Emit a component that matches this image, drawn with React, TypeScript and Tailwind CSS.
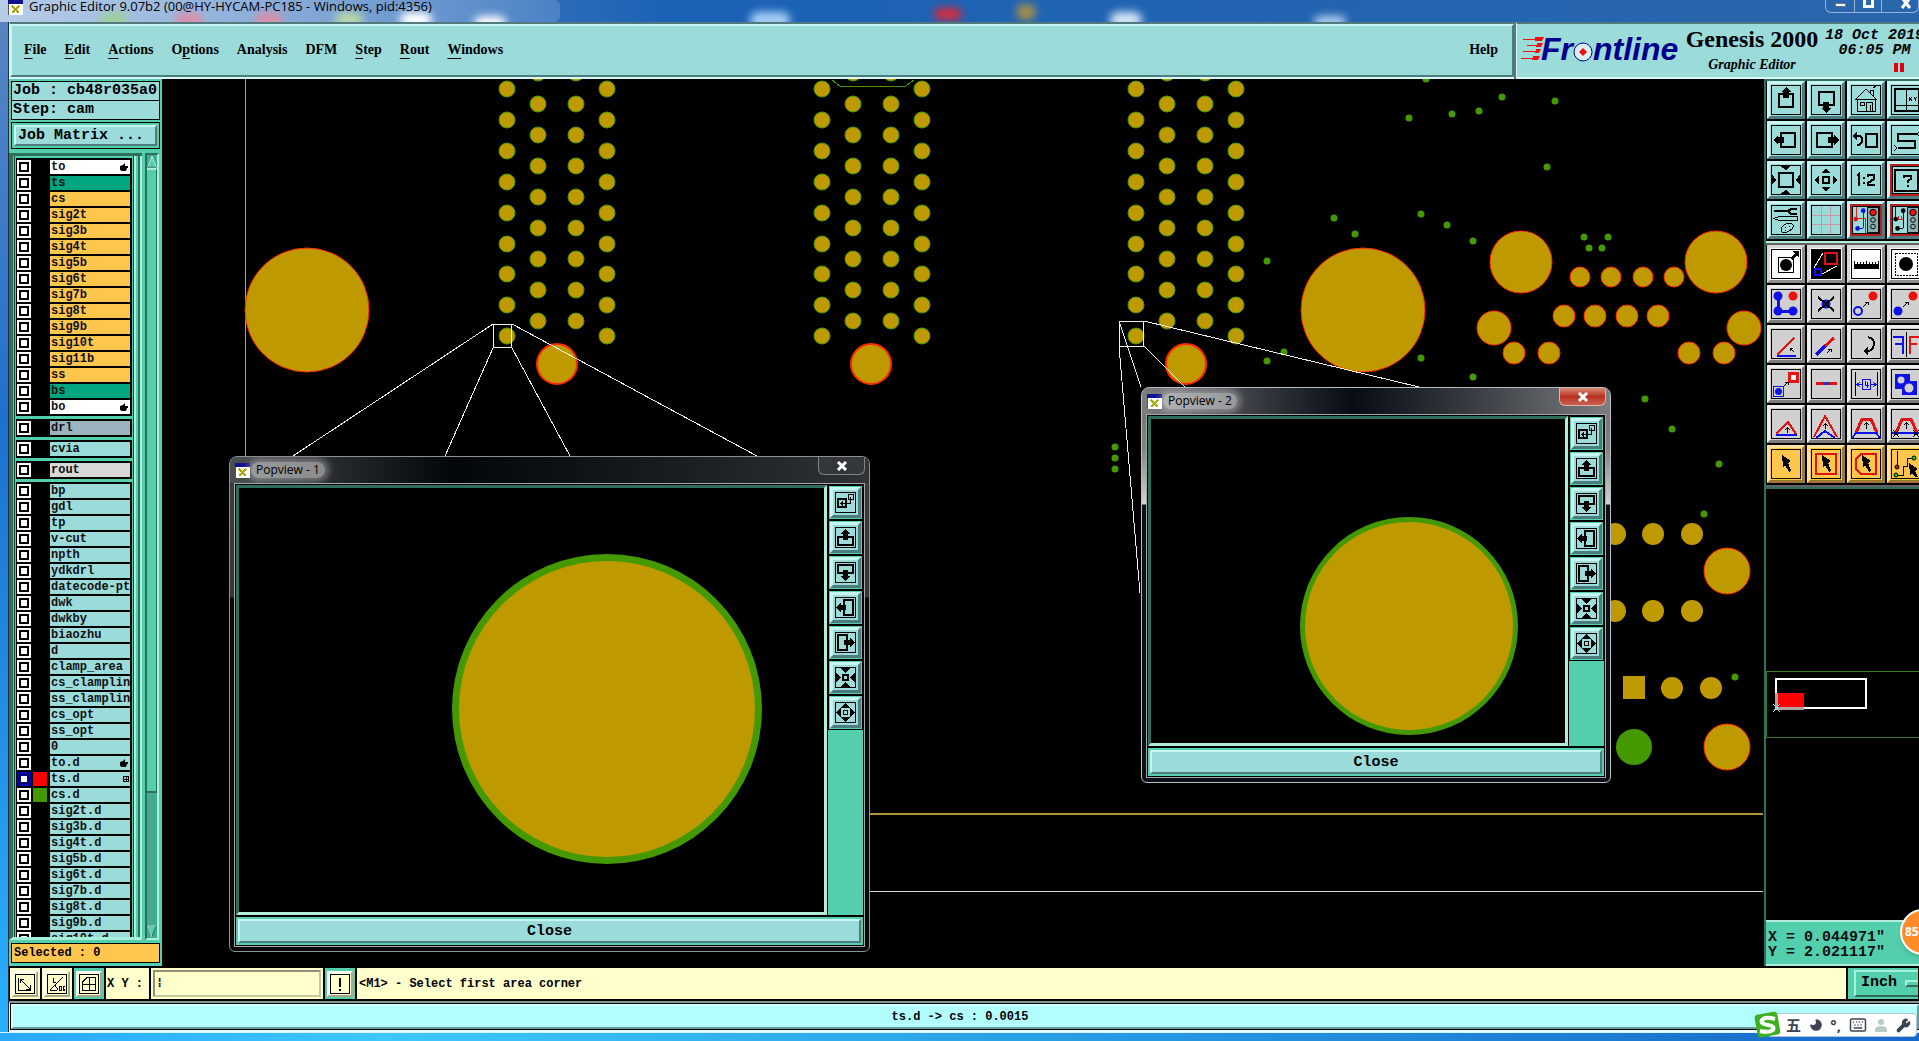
import type { ReactNode } from "react";
import { Keyboard, Moon, Wrench } from "lucide-react";

const mono = "font-['Liberation_Mono',monospace]";
const serif = "font-['Liberation_Serif',serif]";
const ui = "font-['Open_Sans',sans-serif]";

const tealBevel = "border-t-[#c6f5f3] border-l-[#c6f5f3] border-r-[#4d7c80] border-b-[#4d7c80] bg-[#9bdbda]";
const grayBevel = "border-t-[#eeeeee] border-l-[#eeeeee] border-r-[#7c7c7c] border-b-[#7c7c7c] bg-[#d0d0d0]";
const whiteBevel = "border-t-[#d8d8d8] border-l-[#d8d8d8] border-r-[#8c8c8c] border-b-[#8c8c8c] bg-white";
const redBevel = "border-t-[#c6f5f3] border-l-[#c6f5f3] border-r-[#4d7c80] border-b-[#4d7c80] bg-[#b82020]";
const orangeBevel = "border-t-[#ffe2a0] border-l-[#ffe2a0] border-r-[#9c7830] border-b-[#9c7830] bg-[#ffc64e]";

const RED = "#e01414";
const BLUE = "#1010e8";

/* ---------- menu ---------- */

const menus = [
  { pre: "", key: "F", post: "ile" },
  { pre: "", key: "E", post: "dit" },
  { pre: "", key: "A", post: "ctions" },
  { pre: "O", key: "p", post: "tions" },
  { pre: "Analysis", key: "", post: "" },
  { pre: "DFM", key: "", post: "" },
  { pre: "", key: "S", post: "tep" },
  { pre: "", key: "R", post: "out" },
  { pre: "", key: "W", post: "indows" },
];

const XIcon = () => (
  <svg viewBox="0 0 15 15" className="size-[15px] shrink-0" shapeRendering="crispEdges">
    <rect width="15" height="15" fill="#fff" stroke="#555" />
    <rect width="15" height="4" fill="#10108c" />
    <path d="M4 6L11 13M11 6L4 13" stroke="#a8a800" strokeWidth="2" />
  </svg>
);

const TitleBar = () => (
  <div className="relative flex h-[22px] shrink-0 items-start overflow-hidden bg-linear-to-r from-[#6f9ad0] via-[#1a62b6] via-35% to-[#2a66ac]">
    <div className="absolute inset-y-0 left-0 w-[560px] rounded-r-md bg-linear-to-r from-white/50 to-white/15" />
    <div className="absolute top-3 left-[100px] h-4 w-7 rounded-full bg-[#9cd09c] blur-xs" />
    <div className="absolute top-3 left-[175px] h-4 w-7 rounded-full bg-[#d890a8] blur-xs" />
    <div className="absolute top-3 left-[255px] h-4 w-7 rounded-full bg-[#d890a8] blur-xs" />
    <div className="absolute top-3 left-[335px] h-4 w-7 rounded-full bg-[#b8d8a8] blur-xs" />
    <div className="absolute top-3 left-[400px] h-4 w-8 rounded-full bg-white blur-xs" />
    <div className="absolute top-4 left-[474px] h-4 w-8 rounded-full bg-white blur-xs" />
    <div className="absolute top-3 left-[750px] h-4 w-10 rounded-full bg-[#a8d0f8] blur-xs" />
    <div className="absolute top-2 left-[934px] h-3 w-7 rounded-full bg-[#e02838] blur-xs" />
    <div className="absolute top-1 left-[1016px] h-4 w-5 rounded-full bg-[#a89048] blur-xs" />
    <div className="absolute top-3 left-[1110px] h-4 w-8 rounded-full bg-[#d8e8f8] blur-xs" />
    <div className="absolute top-4 left-[1314px] h-3 w-8 rounded-full bg-[#b8d0f0] blur-xs" />
    <div className="relative flex items-center gap-[6px] pl-[8px]">
      <XIcon />
      <span className={`${ui} pb-[2px] text-[13px] leading-[13px] text-black`}>
        Graphic Editor 9.07b2 (00@HY-HYCAM-PC185 - Windows, pid:4356)
      </span>
    </div>
    <div className="relative ml-auto flex h-[13px] w-[94px] shrink-0 divide-x divide-white/50 overflow-hidden rounded-b-md border border-t-0 border-white/50">
      <button aria-label="Minimize" className="flex w-[29px] shrink-0 justify-center pt-[3px]">
        <span className="h-[4px] w-[11px] border border-slate-500 bg-white" />
      </button>
      <button aria-label="Maximize" className="flex w-[27px] shrink-0 justify-center">
        <span className="h-[8px] w-[11px] border-[3px] border-t-0 border-white" />
      </button>
      <button aria-label="Close window" className="flex w-[47px] shrink-0 items-end justify-center">
        <svg viewBox="0 0 12 9" className="mb-[3px] h-[9px] w-[12px]">
          <path d="M2 -2L10 8M10 -2L2 8" stroke="#fff" strokeWidth="3" />
        </svg>
      </button>
    </div>
  </div>
);

const Logo = () => (
  <svg viewBox="0 0 162 40" className="h-[40px] w-[162px] shrink-0" aria-label="Frontline">
    <g fill="#f01010">
      <path d="M2 10h12v-2h9l-2 4h-7v-1H2z" />
      <path d="M6 16h10v-2h6l-2 4h-5v-1H6z" />
      <path d="M2 22h13v-2h5l-2 4h-4v-1H2z" />
      <path d="M0 29h12v-2h7l-2 4h-6v-1H0z" />
    </g>
    <g fill="#00008c" fontFamily="'Liberation Sans', sans-serif" fontWeight="700" fontStyle="italic" fontSize="32">
      <text x="20" y="31">Fr</text>
      <text x="72" y="31">ntline</text>
    </g>
    <ellipse cx="62" cy="23" rx="9" ry="9" fill="#d8f0f4" stroke="#00008c" strokeWidth="1" />
    <path d="M62 19l4 4-4 4-4-4z" fill="#f01010" />
  </svg>
);

const Header = () => (
  <header className="flex h-[57px] shrink-0 bg-[#527a7c]">
    <div className="flex min-w-0 flex-1 items-center border-t-2 border-b-2 border-l border-t-[#527a7c] border-b-[#d8fbf8] border-l-[#d8fbf8] bg-[#9bdbda]">
      <nav className={`flex h-full flex-1 items-center justify-between border-2 border-t-[#c6f5f3] border-l-[#c6f5f3] border-r-[#4d7c80] border-b-[#4d7c80] pr-[14px] pb-[2px] pl-[12px] ${serif} text-[14px] font-bold text-black`}>
        <div className="flex gap-[18px]">
          {menus.map((m) => (
            <button key={m.pre + m.key + m.post}>
              {m.pre}
              <span className="underline underline-offset-4">{m.key}</span>
              {m.post}
            </button>
          ))}
        </div>
        <button>Help</button>
      </nav>
    </div>
    <div className="ml-[2px] flex w-[403px] shrink-0 overflow-hidden border-y-2 border-l border-t-[#527a7c] border-b-[#d8fbf8] border-l-[#d8fbf8] bg-[#9bdbda] pl-[4px]">
      <div className="pt-[5px]">
        <Logo />
      </div>
      <div className={`flex w-[138px] shrink-0 flex-col items-center whitespace-nowrap ${serif} font-bold text-black`}>
        <div className="pt-[2px] text-[24px] leading-[26px]">Genesis 2000</div>
        <div className="pt-[5px] text-[14px] leading-[16px] italic">Graphic Editor</div>
      </div>
      <div className={`ml-[4px] w-[99px] shrink-0 text-center whitespace-nowrap ${mono} pt-[4px] text-[15px] leading-[15px] font-bold text-black italic`}>
        <div>18 Oct 2019</div>
        <div>06:05 PM</div>
        <div className="flex justify-center gap-[2px] pt-[5px] pl-[48px]">
          <span className="h-[9px] w-[4px] bg-red-600" />
          <span className="h-[9px] w-[4px] bg-red-600" />
        </div>
      </div>
    </div>
  </header>
);

/* ---------- layer list ---------- */

type Layer = { name: string; bg: string; mark?: "hand" | "grid"; color?: string; active?: boolean };

const WHITE = "bg-white";
const GREEN = "bg-[#00a67e]";
const AMBER = "bg-[#ffc64e]";
const CYAN = "bg-[#9bdbda]";

const of = (bg: string, names: string[]): Layer[] => names.map((name) => ({ name, bg }));

const layerGroups: Layer[][] = [
  [
    { name: "to", bg: WHITE, mark: "hand" },
    { name: "ts", bg: GREEN },
    ...of(AMBER, ["cs", "sig2t", "sig3b", "sig4t", "sig5b", "sig6t", "sig7b", "sig8t", "sig9b", "sig10t", "sig11b", "ss"]),
    { name: "bs", bg: GREEN },
    { name: "bo", bg: WHITE, mark: "hand" },
  ],
  [{ name: "drl", bg: "bg-[#9bb4c0]" }],
  [{ name: "cvia", bg: CYAN }],
  [{ name: "rout", bg: "bg-[#d8d8d8]" }],
  [
    ...of(CYAN, ["bp", "gdl", "tp", "v-cut", "npth", "ydkdrl", "datecode-pte", "dwk", "dwkby", "biaozhu", "d", "clamp_area", "cs_clampline", "ss_clampline", "cs_opt", "ss_opt", "0"]),
    { name: "to.d", bg: CYAN, mark: "hand" },
    { name: "ts.d", bg: CYAN, mark: "grid", color: "bg-[#ff0000]", active: true },
    { name: "cs.d", bg: CYAN, color: "bg-[#459900]" },
    ...of(CYAN, ["sig2t.d", "sig3b.d", "sig4t.d", "sig5b.d", "sig6t.d", "sig7b.d", "sig8t.d", "sig9b.d", "sig10t.d"]),
  ],
];

const LayerRow = ({ layer }: { layer: Layer }) => (
  <label className="flex h-[16px] items-center gap-[2px]">
    <input
      type="checkbox"
      className={`size-[14px] shrink-0 appearance-none border-2 bg-white ${layer.active ? "border-[#0000b8] shadow-[inset_0_0_0_2px_#000070]" : "border-white shadow-[inset_0_0_0_2px_#000]"}`}
    />
    <span className={`h-[14px] w-[14px] shrink-0 ${layer.color ?? "bg-black"}`} />
    <span className={`ml-px flex h-[14px] min-w-0 flex-1 items-center overflow-hidden pl-px text-[12px] leading-[14px] font-bold whitespace-nowrap text-[#101010] ${layer.bg}`}>
      {layer.name}
      {layer.mark === "hand" && (
        <svg viewBox="0 0 8 8" className="mr-[2px] ml-auto size-[8px]">
          <path d="M0 3L3 2L5 0V3H8V5H7L6 8H2L0 7Z" />
        </svg>
      )}
      {layer.mark === "grid" && (
        <svg viewBox="0 0 6 6" className="mr-px ml-auto size-[6px]" shapeRendering="crispEdges">
          <path d="M.5 .5h5v5h-5zM3 0v6M0 3h6" fill="none" stroke="#000" />
        </svg>
      )}
    </span>
  </label>
);

const Sidebar = () => (
  <aside className={`flex w-[153px] shrink-0 flex-col bg-[#53cfae] ${mono} text-black`}>
    <div className="mx-[2px] mt-[2px] text-[15px] leading-[18px] font-bold">
      <div className="h-[20px] border border-black bg-[#9bdbda] pl-px">Job : cb48r035a0</div>
      <div className="-mt-px h-[20px] border border-black bg-[#9bdbda] pl-px">Step: cam</div>
    </div>
    <div className="mx-[2px] mt-[2px] h-[27px] border border-black p-[2px]">
      <button className={`block h-full w-full border-2 pl-[2px] text-left text-[15px] leading-[18px] font-bold ${tealBevel}`}>
        Job Matrix ...
      </button>
    </div>
    <div className="mt-[4px] flex min-h-0 flex-1">
      <div className="flex min-w-0 flex-1 overflow-hidden border-t-[3px] border-b-[3px] border-l-4 border-t-[#2e6e5c] border-b-[#a8f0dc] border-l-[#2e6e5c] pl-px">
        <div className="w-[121px] overflow-hidden border-r border-l border-[#184838] px-px pt-[2px]">
          {layerGroups.map((group) => (
            <div key={group[0].name} className="mb-[3px] border border-black bg-black pr-px">
              {group.map((layer) => (
                <LayerRow key={layer.name} layer={layer} />
              ))}
            </div>
          ))}
        </div>
        <div className="w-[2px] bg-[#a8f0dc]" />
        <div className="ml-[2px] w-[2px] bg-[#2e6e5c]" />
        <div className="w-[2px] bg-[#a8f0dc]" />
      </div>
      <div className="ml-[3px] flex w-[14px] flex-col border-2 border-t-[#2e6e5c] border-l-[#2e6e5c] border-r-[#a8f0dc] border-b-[#a8f0dc] bg-[#43ab92]">
        <svg viewBox="0 0 10 13" className="h-[13px] w-[10px]">
          <path d="M5 1L9 12H1Z" fill="#53cfae" stroke="#a8f0dc" />
          <path d="M9 12H1" stroke="#2e6e5c" />
        </svg>
        <div className="flex-[625] border-t-2 border-r border-b-2 border-t-[#a8f0dc] border-r-[#2e6e5c] border-b-[#2e6e5c] bg-[#53cfae]" />
        <div className="flex-[133]" />
        <svg viewBox="0 0 10 13" className="h-[13px] w-[10px]">
          <path d="M5 12L9 1H1Z" fill="#53cfae" stroke="#2e6e5c" />
          <path d="M9 1H1L5 12" fill="none" stroke="#a8f0dc" />
        </svg>
      </div>
      <div className="w-[3px]" />
    </div>
    <div className="mx-[2px] mt-[3px] mb-[3px] h-[20px] border border-black bg-[#ffc64e] pl-[2px] text-[12px] leading-[18px] font-bold">
      Selected : 0
    </div>
  </aside>
);

/* ---------- board drawing ---------- */

const GOLD = "#bf9900";
const LEAF = "#459900";

const connectors = [0, 315, 629];
const outerRows = [89, 120, 151, 182, 213, 244, 274, 305, 336];
const innerRows = [73, 104, 135, 166, 197, 228, 259, 290, 321];

const ringed = [
  [307, 310, 62], [1363, 310, 62],
  [557, 364, 20], [871, 364, 20], [1186, 364, 20],
  [1521, 262, 31], [1716, 262, 31],
  [1580, 277, 10], [1611, 277, 10], [1643, 277, 10], [1674, 277, 10],
  [1564, 316, 11], [1595, 316, 11], [1627, 316, 11], [1658, 316, 11],
  [1494, 328, 17], [1744, 328, 17],
  [1514, 353, 11], [1549, 353, 11], [1689, 353, 11], [1724, 353, 11],
  [1727, 571, 23], [1727, 747, 23],
];

const plain = [
  [1615, 534], [1653, 534], [1692, 534],
  [1615, 611], [1653, 611], [1692, 611],
  [1672, 688], [1711, 688],
];

const vias = [
  [1426, 79], [1409, 118], [1452, 114], [1479, 111], [1502, 97], [1555, 101], [1547, 167],
  [1421, 214], [1447, 225], [1473, 241], [1584, 237], [1608, 237], [1589, 248], [1602, 248],
  [1421, 358], [1473, 377], [1645, 399], [1672, 429], [1719, 464], [1704, 514], [1735, 677],
  [1334, 218], [1355, 234], [1267, 261], [1284, 352], [1267, 361],
  [1115, 447], [1115, 458], [1115, 469],
];

const Board = () => (
  <svg className="absolute inset-0 h-full w-full [&_circle]:[shape-rendering:auto]" shapeRendering="crispEdges">
    <g transform="translate(-162 -79)">
      <path d="M245 79V460" stroke="#a0a0a0" />
      <path d="M860 814H1763" stroke="#b09038" strokeWidth="2" />
      <path d="M860 891H1763" stroke="#d8d8d8" />
      <path d="M832 80L840 86H906L914 80" fill="none" stroke={LEAF} />
      {connectors.map((dx) => (
        <g key={dx} fill={GOLD} stroke={LEAF} transform={`translate(${dx} 0)`}>
          {outerRows.map((y) => [507, 607].map((x) => <circle key={`${x}-${y}`} cx={x} cy={y} r="8" />))}
          {innerRows.map((y) => [538, 576].map((x) => <circle key={`${x}-${y}`} cx={x} cy={y} r="8" />))}
        </g>
      ))}
      {ringed.map(([x, y, r]) => (
        <circle key={`${x}-${y}`} cx={x} cy={y} r={r} fill={GOLD} stroke="#ff2800" strokeWidth={r === 20 ? 2 : 1} />
      ))}
      {plain.map(([x, y]) => (
        <circle key={`${x}-${y}`} cx={x} cy={y} r="11" fill={GOLD} />
      ))}
      <rect x="1623" y="676" width="22" height="23" fill={GOLD} />
      <circle cx="1634" cy="747" r="18" fill={LEAF} />
      {vias.map(([x, y]) => (
        <circle key={`${x}-${y}`} cx={x} cy={y} r="3.500" fill={LEAF} />
      ))}
      <g fill="none" stroke="#f0f0f0">
        <rect x="493" y="324" width="18" height="23" />
        <path d="M493 324L293 456M493 348L445 456M512 348L570 456M512 324L757 456" />
        <rect x="1119" y="321" width="24" height="25" />
        <path d="M1119 321L1141 387M1119 346L1140 593M1144 346L1185 387M1144 321L1419 387" />
      </g>
    </g>
  </svg>
);

/* ---------- popview windows ---------- */

const popIcons: { label: string; art: ReactNode }[] = [
  {
    label: "Locate",
    art: (
      <>
        <path d="M3 7h8v8H3z" fill="none" stroke="#000" strokeWidth="2" />
        <path d="M13.5 2.5h5v5h-5zM15.500 5V11.500H6M8 9.500L6 11.500L8 13.500" fill="none" stroke="#000" />
      </>
    ),
  },
  {
    label: "Pan up",
    art: (
      <>
        <path d="M8 10H3V18H18V10H13" fill="none" stroke="#000" strokeWidth="2" />
        <path d="M10.500 2L16 7H13V13H8V7H5Z" />
      </>
    ),
  },
  {
    label: "Pan down",
    art: (
      <>
        <path d="M8 11H3V3H18V11H13" fill="none" stroke="#000" strokeWidth="2" />
        <path d="M10.500 19L16 14H13V8H8V14H5Z" />
      </>
    ),
  },
  {
    label: "Pan left",
    art: (
      <>
        <path d="M9 8V3H18V18H9V13" fill="none" stroke="#000" strokeWidth="2" />
        <path d="M1 10.500L6 5V8H11V13H6V16Z" />
      </>
    ),
  },
  {
    label: "Pan right",
    art: (
      <>
        <path d="M12 8V3H3V18H12V13" fill="none" stroke="#000" strokeWidth="2" />
        <path d="M20 10.500L15 5V8H9V13H15V16Z" />
      </>
    ),
  },
  {
    label: "Zoom in",
    art: (
      <>
        <path d="M8 8h5v5H8z" fill="none" stroke="#000" strokeWidth="2" />
        <path d="M5 1H16L10.500 6ZM5 20H16L10.500 15ZM1 5V16L6 10.500ZM20 5V16L15 10.500Z" />
      </>
    ),
  },
  {
    label: "Zoom out",
    art: (
      <>
        <path d="M8.500 8.500h4v4h-4z" fill="none" stroke="#000" />
        <path d="M6 6H15L10.500 1ZM6 15H15L10.500 20ZM6 6V15L1 10.500ZM15 6V15L20 10.500Z" />
      </>
    ),
  },
];

type PopviewProps = {
  title: string;
  place: string;
  frame: string;
  bar: string;
  closeButton: string;
  children: ReactNode;
};

const Popview = ({ title, place, frame, bar, closeButton, children }: PopviewProps) => (
  <section className={`absolute flex flex-col overflow-hidden rounded-t-lg rounded-b-md border px-[4px] pb-[4px] ${place} ${frame}`}>
    <div className={`-mx-[4px] flex h-[26px] shrink-0 items-start px-[4px] ${bar}`}>
      <div className="mt-[5px] ml-px flex items-center">
        <XIcon />
        <h2 className={`${ui} ml-px rounded-full bg-white/45 px-[5px] text-[12px] leading-[16px] text-black shadow-[0_0_6px_4px_#ffffff50]`}>
          {title}
        </h2>
      </div>
      <button aria-label={`Close ${title}`} className={`ml-auto flex h-[18px] w-[47px] items-center justify-center rounded-b-md border border-t-0 ${closeButton}`}>
        <svg viewBox="0 0 12 10" className="h-[10px] w-[12px]">
          <path d="M2 1L10 9M10 1L2 9" stroke="#fff" strokeWidth="3" />
        </svg>
      </button>
    </div>
    <div className="flex min-h-0 flex-1 flex-col border border-[#a4a8aa] bg-black p-px">
      <div className="flex min-h-0 flex-1 gap-px">
        <div className="relative min-w-0 flex-1 border-[3px] border-t-[#2e6e5c] border-l-[#2e6e5c] border-r-[#b4ecdc] border-b-[#b4ecdc] bg-black">
          {children}
        </div>
        <div className="flex w-[35px] flex-col bg-[#53cfae]">
          {popIcons.map((icon) => (
            <button key={icon.label} aria-label={icon.label} className="h-[35px] shrink-0 border border-black bg-[#53cfae] p-px">
              <span className={`flex h-full w-full items-center justify-center border-[3px] ${tealBevel}`}>
                <svg viewBox="0 0 21 21" className="size-[21px] shrink-0" shapeRendering="crispEdges">
                  <rect x=".5" y=".5" width="20" height="20" fill="none" stroke="#000" />
                  {icon.art}
                </svg>
              </span>
            </button>
          ))}
        </div>
      </div>
      <div className="mt-[2px] h-[28px] shrink-0 bg-[#53cfae] p-[2px]">
        <button className={`block h-full w-full border-2 text-center text-[15px] leading-[22px] font-bold text-black ${mono} ${tealBevel}`}>
          Close
        </button>
      </div>
    </div>
  </section>
);

const Pad = ({ cx, cy, r, ring }: { cx: number; cy: number; r: number; ring: number }) => (
  <svg className="absolute inset-0 h-full w-full">
    <circle cx={cx} cy={cy} r={r} fill={LEAF} />
    <circle cx={cx} cy={cy} r={r - ring} fill={GOLD} />
  </svg>
);

/* ---------- right tool panel ---------- */

type Tool = { label: string; bevel: string; art: ReactNode; dark?: boolean; alert?: boolean };

const light = (x: number, on: string) => (
  <>
    <rect x={x} y="2" width="11" height="26" fill="#88b0b0" stroke="#000" />
    <circle cx={x + 5.5} cy="7" r="3.500" fill={on} stroke="#000" />
    <circle cx={x + 5.5} cy="15" r="2.500" fill="none" stroke="#000" />
    <circle cx={x + 5.5} cy="22" r="2.500" fill="none" stroke="#000" />
  </>
);

const cursor = <path d="M11 6L20 12L17 14L20 21L18 23L14 16L12 18Z" />;

const viewTools: Tool[] = [
  { label: "Pan up", bevel: tealBevel, art: <><path d="M8 9H22V22H8Z" fill="none" stroke="#000" strokeWidth="2" /><path d="M15 2L20 7H18V13H12V7H10Z" /></> },
  { label: "Pan down", bevel: tealBevel, art: <><path d="M8 7H23V20H8Z" fill="none" stroke="#000" strokeWidth="2" /><path d="M15 28L20 23H18V17H12V23H10Z" /></> },
  { label: "Home", bevel: tealBevel, art: <path d="M5 14L15 4L25 14ZM6.500 14V26.500H24.500V14M9.500 17.500H13.500V20.500H9.500ZM15.500 26V17.500H21.500V26M19 26V20M19.500 8V5.500H22.500V11M22 3L25 1" fill="none" stroke="#000" /> },
  { label: "Coordinates", bevel: tealBevel, art: <><path d="M4 4H28V26H4Z" fill="none" stroke="#000" strokeWidth="2" /><path d="M15.500 4V26M4 20.500H28M18 12L21 16M21 12L18 16M23 12L24.500 14L26 12M24.500 14V16" fill="none" stroke="#000" /></> },
  { label: "Pan left", bevel: tealBevel, art: <><path d="M10 8H24V22H10Z" fill="none" stroke="#000" strokeWidth="2" /><path d="M2 15L7 10V12H13V18H7V20Z" /></> },
  { label: "Pan right", bevel: tealBevel, art: <><path d="M6 8H21V22H6Z" fill="none" stroke="#000" strokeWidth="2" /><path d="M28 15L23 10V12H17V18H23V20Z" /></> },
  { label: "Previous view", bevel: tealBevel, art: <><path d="M15 9H26V22H15Z" fill="none" stroke="#000" strokeWidth="2" /><path d="M5 11H8Q11 11 11 15Q11 20 6 20" fill="none" stroke="#000" strokeWidth="2" /><path d="M1 11L6 7V15Z" /></> },
  { label: "Snake", bevel: tealBevel, art: <><path d="M26 9H7V16H24V23H7" fill="none" stroke="#000" strokeWidth="2" /><path d="M3 20L6 23L3 26M29 6L26 9L29 12" fill="none" stroke="#000" /></> },
  { label: "Zoom in", bevel: tealBevel, art: <><path d="M8 8H22V22H8Z" fill="none" stroke="#000" strokeWidth="2" /><path d="M9 1H20L15 5ZM9 29H20L15 25ZM1 9V20L5 15ZM29 9V20L25 15Z" /></> },
  { label: "Zoom out", bevel: tealBevel, art: <><path d="M12 12H18V18H12Z" fill="none" stroke="#000" strokeWidth="2" /><path d="M10 8H20L15 4ZM10 22H20L15 26ZM8 10V20L4 15ZM22 10V20L26 15Z" /></> },
  { label: "Scale 1:2", bevel: tealBevel, art: <path d="M6 11L8 9V21M13 12V14M13 17V19M17 12V10H23V14L17 18V20H24" fill="none" stroke="#000" strokeWidth="2" /> },
  { label: "Help", bevel: redBevel, alert: true, art: <><path d="M3 4H28V27H3Z" fill="none" stroke="#000" strokeWidth="2" /><path d="M13 13V11H20V14L17 16V18M17 20V22" fill="none" stroke="#000" strokeWidth="2" /></> },
  { label: "Settings", bevel: tealBevel, art: <><path d="M3 6H17" stroke="#000" strokeWidth="2" /><path d="M26 4H20L17 6L20 9H26" fill="none" stroke="#000" strokeWidth="2" /><path d="M3 13.500L8 11.500H26V15.500H8ZM11 22Q14 18 20 18.500Q24 20 21 24Q16 29 11 27Q9 25 11 22M14 22h1M18 21h1M14 25h1" fill="none" stroke="#000" /></> },
  { label: "Grid", bevel: tealBevel, art: <path d="M10.500 1V29M19.500 1V29M1 10.500H29M1 19.500H29" stroke="#c898a8" /> },
  { label: "Net check", bevel: redBevel, alert: true, art: <><path d="M4.500 1V13H14V29" fill="none" stroke={RED} /><path d="M13 5L12 24H7" fill="none" stroke={BLUE} /><circle cx="4" cy="14" r="2.500" fill={RED} /><circle cx="12" cy="5" r="2.500" fill={BLUE} /><circle cx="6" cy="24" r="2.500" fill={BLUE} />{light(17, "#f01010")}</> },
  { label: "Net compare", bevel: redBevel, alert: true, art: <><path d="M4 1V13M12 5V24H7" fill="none" stroke="#000" /><path d="M5 14H12M7 11V14M10 11V14" stroke={RED} /><circle cx="4" cy="14" r="2.500" /><circle cx="12" cy="5" r="2.500" /><circle cx="6" cy="24" r="2.500" />{light(17, "#f01010")}</> },
];

const editTools: Tool[] = [
  { label: "Select pad", bevel: whiteBevel, art: <><path d="M7.500 8.500H22.500V23.500H7.500Z" fill="none" stroke="#000" /><circle cx="15" cy="16" r="6" /><path d="M19 9L24 5L22 2H28V8L26 7L21 11Z" /></> },
  { label: "Popview", bevel: whiteBevel, dark: true, art: <><path d="M3 19L12 4M11 25L26 17" stroke="#fff" /><path d="M14 4H26V15H14Z" fill="none" stroke={RED} strokeWidth="2" /><path d="M4 20H10V26H4Z" fill="none" stroke={BLUE} strokeWidth="2" /></> },
  { label: "Measure", bevel: whiteBevel, art: <><rect x="3" y="15" width="25" height="5" /><path d="M3.500 12V16M6.500 13V16M9.500 13V16M12.500 13V16M15.500 12V16M18.500 13V16M21.500 13V16M24.500 13V16M27.500 12V16" stroke="#000" /></> },
  { label: "Area select", bevel: whiteBevel, art: <><path d="M4.500 4.500H26.500V26.500H4.500Z" fill="none" stroke="#000" strokeDasharray="2 1" /><circle cx="15" cy="15" r="7" /></> },
  { label: "Connect", bevel: grayBevel, art: <><path d="M7 7V22H22" fill="none" stroke={BLUE} strokeWidth="3" /><circle cx="7" cy="7" r="4.500" fill={BLUE} /><circle cx="7" cy="22" r="4.500" fill={BLUE} /><circle cx="22" cy="22" r="4.500" fill={BLUE} /><circle cx="22" cy="7" r="4.500" fill="#f01010" /></> },
  { label: "Delete", bevel: grayBevel, art: <><circle cx="15" cy="15" r="4.500" fill={BLUE} /><path d="M7 8L23 22M23 8L7 22" stroke="#000" strokeWidth="2" /></> },
  { label: "Move copy", bevel: grayBevel, art: <><circle cx="22" cy="7" r="4.500" fill="#f01010" /><circle cx="7" cy="22" r="4" fill="none" stroke={BLUE} strokeWidth="2" /><path d="M12 18L17 13M14 13H17V16" fill="none" stroke="#000" /></> },
  { label: "Move", bevel: grayBevel, art: <><circle cx="22" cy="7" r="4.500" fill="#f01010" /><circle cx="7" cy="22" r="4.500" fill={BLUE} /><path d="M12 18L17 13M14 13H17V16" fill="none" stroke="#000" /></> },
  { label: "Rotate line", bevel: grayBevel, art: <><path d="M6 26L23 9" stroke={RED} strokeWidth="2" /><path d="M6 27H25" stroke={BLUE} strokeWidth="2" /><path d="M23 23L19 19M19 22V19H22" fill="none" stroke="#000" /></> },
  { label: "Stretch line", bevel: grayBevel, art: <><path d="M14 17L23 9" stroke={RED} strokeWidth="3" /><path d="M5 26L14 17" stroke={BLUE} strokeWidth="3" /><path d="M16 24L20 20M17 20H20V23" fill="none" stroke="#000" /></> },
  { label: "Rotate", bevel: grayBevel, art: <><path d="M17 8Q24 10 23 16Q21 23 15 22" fill="none" stroke="#000" strokeWidth="2" /><path d="M12 22L17 18V26Z" /></> },
  { label: "Mirror", bevel: grayBevel, art: <><path d="M2 8H12V25M4 15H12" fill="none" stroke={BLUE} strokeWidth="2" /><path d="M15.500 3V28" stroke="#000" /><path d="M28 8H19V25M19 15H26" fill="none" stroke={RED} strokeWidth="2" /></> },
  { label: "Resize", bevel: grayBevel, art: <><path d="M18 4H26V12H18Z" fill="#fff" stroke="#f01010" strokeWidth="3" /><path d="M2.500 17.500H12.500V27.500H2.500Z" fill="none" stroke={BLUE} /><circle cx="7.500" cy="22.500" r="3.500" fill={BLUE} /><path d="M13 17L17 13M14 13H17V16" fill="none" stroke="#000" /></> },
  { label: "Break", bevel: grayBevel, art: <><path d="M5 14.500H26" stroke={RED} strokeWidth="3" /><path d="M12 14.500H19" stroke="#3030b0" strokeWidth="3" /></> },
  { label: "Spacing", bevel: grayBevel, art: <><path d="M4.500 3V27M26.500 3V27" stroke="#000" /><path d="M6 15.500H11M9 13L6 15.500L9 18M25 15.500H20M22 13L25 15.500L22 18M11.500 10.500H19.500V20.500H11.500ZM14 12V16H18M16.500 13V19" fill="none" stroke={BLUE} /></> },
  { label: "Merge", bevel: grayBevel, art: <><path d="M4 5H19V12H26V26H11V20H4Z" fill={BLUE} /><circle cx="10" cy="11" r="3.500" fill="#d0d0d0" /><circle cx="18" cy="19" r="4.500" fill="#d0d0d0" /></> },
  { label: "Triangle", bevel: grayBevel, art: <><path d="M5 25L17 13L25 25" fill="none" stroke={RED} strokeWidth="2" /><path d="M5 26H26" stroke={BLUE} strokeWidth="2" /><path d="M16.500 24V19M14 21L16.500 19L19 21" fill="none" stroke="#000" /></> },
  { label: "Sharp corner", bevel: grayBevel, art: <><path d="M3 28L14 7L26 28" fill="none" stroke={RED} strokeWidth="2" /><path d="M5 29L14 22L24 29" fill="none" stroke={BLUE} strokeWidth="2" /><path d="M14.500 20V15M12 17L14.500 15L17 17" fill="none" stroke="#000" /></> },
  { label: "Trapezoid", bevel: grayBevel, art: <><path d="M5 24L11 10H20L26 24" fill="none" stroke={RED} strokeWidth="3" /><path d="M1 29L5 24H25L29 29" fill="none" stroke={BLUE} strokeWidth="2" /><path d="M15.500 20V14M13 16L15.500 14L18 16" fill="none" stroke="#000" /></> },
  { label: "Trim trapezoid", bevel: grayBevel, art: <><path d="M5 24L11 10H20L26 24" fill="none" stroke={RED} strokeWidth="3" /><path d="M1 24H29" stroke={BLUE} strokeWidth="2" /><path d="M15.500 20V14M13 16L15.500 14L18 16M2 21L8 28M8 21L2 28M22 21L28 28M28 21L22 28" fill="none" stroke="#000" /></> },
  { label: "Pointer", bevel: orangeBevel, art: cursor },
  { label: "Rectangle select", bevel: orangeBevel, art: <><path d="M5 5H25V25H5Z" fill="none" stroke={RED} strokeWidth="2" />{cursor}</> },
  { label: "Polygon select", bevel: orangeBevel, art: <><path d="M10 5H25V25H10L5 20V10Z" fill="none" stroke={RED} strokeWidth="2" />{cursor}</> },
  { label: "Net select", bevel: orangeBevel, art: <><path d="M6.500 2V17M6 26H12V17H16V9H22" fill="none" stroke="#000" /><circle cx="6" cy="18" r="2" fill="#c02010" stroke="#000" /><circle cx="5" cy="26" r="2" fill="#20d020" stroke="#000" /><circle cx="23" cy="9" r="2" fill="#20d020" stroke="#000" /><path d="M18 14L27 20L24 22L27 28H24L21 24L19 26Z" /></> },
];

const ToolGrid = ({ tools }: { tools: Tool[] }) => (
  <div className="grid w-[160px] grid-cols-4">
    {tools.map((tool) => (
      <button key={tool.label} aria-label={tool.label} className={`mr-[2px] mb-[2px] flex h-[38px] items-center justify-center border-[3px] ${tool.bevel}`}>
        <svg
          viewBox="0 0 30 30"
          className={`shrink-0 [&_circle]:[shape-rendering:auto] ${tool.alert ? "size-[28px] bg-[#9bdbda]" : "size-[30px]"}`}
          shapeRendering="crispEdges"
        >
          <rect x=".5" y=".5" width="29" height="29" fill={tool.dark ? "#000" : "none"} stroke="#000" />
          {tool.art}
        </svg>
      </button>
    ))}
  </div>
);

const RightPanel = () => (
  <aside className="flex w-[155px] shrink-0 flex-col overflow-hidden border-l-2 border-[#2e6e5c] bg-black">
    <div className="shrink-0 border-t-2 border-t-[#2e6e5c] pl-px">
      <ToolGrid tools={viewTools} />
    </div>
    <div className="h-[2px] shrink-0 bg-[#b4ecdc]" />
    <div className="shrink-0 border-y-2 border-[#606060] pl-px">
      <ToolGrid tools={editTools} />
    </div>
    <div className="min-h-0 flex-1 border-t-2 border-[#2e6e5c]">
      <svg className="h-full w-full" shapeRendering="crispEdges">
        <g transform="translate(-1766 -489)">
          <rect x="1766.500" y="671.500" width="200" height="66" fill="none" stroke="#3c7820" />
          <rect x="1776" y="679" width="90" height="29" fill="none" stroke="#fff" strokeWidth="2" />
          <rect x="1775" y="693" width="29" height="17" fill="#b0a0a4" />
          <rect x="1778" y="693" width="26" height="14" fill="#ff0000" />
          <path d="M1773 704L1780 712M1780 704L1773 712" stroke="#80f0f0" />
        </g>
      </svg>
    </div>
    <div className={`h-[46px] shrink-0 border-y-2 border-t-[#b4ecdc] border-b-[#b4ecdc] bg-[#53cfae] pt-[8px] pl-[2px] ${mono} text-[15px] leading-[15px] font-bold whitespace-pre text-[#101010]`}>
      <div>X = 0.044971"</div>
      <div>Y = 2.021117"</div>
    </div>
  </aside>
);

/* ---------- bottom bars ---------- */

const yellowBevel = "border-2 border-t-[#fffff0] border-l-[#fffff0] border-r-[#a8a888] border-b-[#a8a888] bg-[#ffffcc]";

const SmallButton = ({ label, on, children }: { label: string; on?: boolean; children: ReactNode }) => (
  <button aria-label={label} className={`flex h-[31px] w-[30px] shrink-0 items-center justify-center ${on ? "bg-[#53cfae]" : "bg-[#ffffcc]"}`}>
    <span className={`flex size-[26px] items-center justify-center ${yellowBevel}`}>
      <svg viewBox="0 0 20 20" className="size-[20px] shrink-0" fill="none" stroke="#000" shapeRendering="crispEdges">
        <rect x=".5" y=".5" width="19" height="19" />
        {children}
      </svg>
    </span>
  </button>
);

const CommandBar = () => (
  <div className={`flex h-[35px] shrink-0 items-center gap-[2px] bg-black px-px ${mono} text-[12px] font-bold text-black`}>
    <SmallButton label="Snap diagonal">
      <path d="M3.500 4V16.500H16M5 5L15 15M5 9V5H9M11 15H15V11" />
    </SmallButton>
    <SmallButton label="Snap angle">
      <path d="M3 16L16 3M3 16.500H10M6 4V8H9M8 11L11 16M12 12.500h2v4h-2zM16 12V17M18 12L16 14L18 17" />
    </SmallButton>
    <SmallButton label="Snap grid" on>
      <path d="M3.500 8L8 3.500H16.500V16.500H3.500ZM3 10.500H17M10.500 4V17" />
    </SmallButton>
    <label htmlFor="xy" className="flex h-[31px] w-[43px] shrink-0 items-center bg-[#ffffcc] pl-px whitespace-pre">
      X Y :
    </label>
    <div className="h-[31px] w-[172px] shrink-0 bg-[#ffffcc] p-[2px]">
      <input id="xy" className="block h-full w-full border-2 border-t-[#909078] border-l-[#909078] border-r-[#c8c8a0] border-b-[#c8c8a0] bg-[#ffffcc] px-px outline-none" defaultValue="⁞" />
    </div>
    <SmallButton label="Alert" on>
      <path d="M10 4V13M10 15V17" strokeWidth="2" />
    </SmallButton>
    <div className="flex h-[31px] min-w-0 flex-1 items-center bg-[#ffffcc] pl-[2px]">{"<M1> - Select first area corner"}</div>
    <div className="h-[31px] w-[70px] shrink-0 overflow-hidden bg-[#53cfae] py-[2px] pl-[6px]">
      <button className="flex h-full w-[80px] items-center gap-[8px] border-2 border-t-[#a8f0dc] border-l-[#a8f0dc] border-r-[#2e6e5c] border-b-[#2e6e5c] pl-[5px] text-[15px]">
        Inch
        <span className="h-[7px] w-[16px] border-2 border-t-[#a8f0dc] border-l-[#a8f0dc] border-r-[#2e6e5c] border-b-[#2e6e5c]" />
      </button>
    </div>
  </div>
);

const StatusBar = () => (
  <div className="h-[31px] shrink-0 border-t-2 border-[#7c9898] bg-[#e8ffff] pl-px">
    <div className="h-[27px] border border-r-0 border-black">
      <div className={`flex h-full items-center justify-center border-2 border-t-[#d8ffff] border-l-[#d8ffff] border-r-[#6c9c9c] border-b-[#6c9c9c] bg-[#b2fdfd] pr-[10px] ${mono} text-[12px] font-bold text-black`}>
        {"ts.d -> cs : 0.0015"}
      </div>
    </div>
  </div>
);

const ImeBar = () => (
  <div className="absolute right-[2px] bottom-[4px] flex h-[24px] w-[150px] items-center justify-between rounded-sm border border-[#b0c4d8] bg-white pr-[5px] pl-[14px] text-[#3c4450]">
    <svg viewBox="0 0 28 28" className="absolute -top-[3px] -left-[14px] size-[28px]">
      <rect x="2" y="2" width="23" height="23" rx="3" fill="#3cb020" transform="rotate(-10 14 14)" />
      <path d="M21 8Q11 5 8 9Q6 13 14 14Q21 15 19 19Q15 22 6 20" fill="none" stroke="#fff" strokeWidth="4" />
    </svg>
    <span className="pl-[4px] font-['Noto_Sans_CJK_SC',sans-serif] text-[15px] leading-[20px] font-bold">五</span>
    <Moon className="size-[14px] -scale-x-100" fill="#3c4450" />
    <span className="text-[15px] leading-[16px] font-bold">°,</span>
    <Keyboard className="size-[18px]" />
    <svg viewBox="0 0 14 14" className="size-[14px]" fill="#b8ccc8">
      <circle cx="7" cy="4" r="3" />
      <path d="M1 14V11Q2 8 7 8Q12 8 13 11V14Z" />
    </svg>
    <Wrench className="size-[15px]" fill="#3c4450" />
  </div>
);

export default function App() {
  return (
    <div className="relative flex h-screen flex-col overflow-hidden bg-linear-to-b from-[#5a86c0] via-[#1e70d0] via-40% to-[#2ab0ff]">
      <TitleBar />
      <div className="ml-[8px] flex min-h-0 flex-1 flex-col border-l border-[#203040]">
        <Header />
        <div className="flex min-h-0 flex-1">
          <Sidebar />
          <main className="relative min-w-0 flex-1 overflow-hidden bg-black">
            <Board />
            <Popview
              title="Popview - 1"
              place="top-[377px] left-[67px] h-[496px] w-[641px]"
              frame="border-[#8c9092] bg-[linear-gradient(#3a3d40,#34373a_140px,#08090a_141px)]"
              bar="bg-linear-to-r from-[#4c4f52] via-[#04070a] via-35% to-[#303336]"
              closeButton="border-[#808488] bg-[#34373a]"
            >
              <Pad cx={368} cy={221} r={155} ring={7} />
            </Popview>
            <Popview
              title="Popview - 2"
              place="top-[308px] left-[979px] h-[396px] w-[470px]"
              frame="border-[#b8bcc0] bg-[linear-gradient(#707274,#808284_60px,#d0d2d4_116px,#0c1018_117px)]"
              bar="bg-linear-to-r from-[#7c7e80] via-[#080c14] via-45% to-[#7c7e80]"
              closeButton="border-[#e8b0a0] bg-linear-to-b from-[#d88878] via-[#b83020] to-[#c86050]"
            >
              <Pad cx={258} cy={207} r={109} ring={5} />
            </Popview>
          </main>
          <RightPanel />
        </div>
        <CommandBar />
        <StatusBar />
      </div>
      <div className="h-[9px] shrink-0 border-t border-[#d8f4ff] bg-linear-to-r from-[#2aa8ff] via-[#3cc8fa] via-20% to-[#1868c8]" />
      <div className={`absolute right-[-27px] bottom-[86px] flex size-[46px] items-center rounded-full border-2 border-white bg-[#ff8c28] pl-[3px] ${ui} text-[12px] font-bold text-white shadow-md`}>
        85
      </div>
      <ImeBar />
    </div>
  );
}
